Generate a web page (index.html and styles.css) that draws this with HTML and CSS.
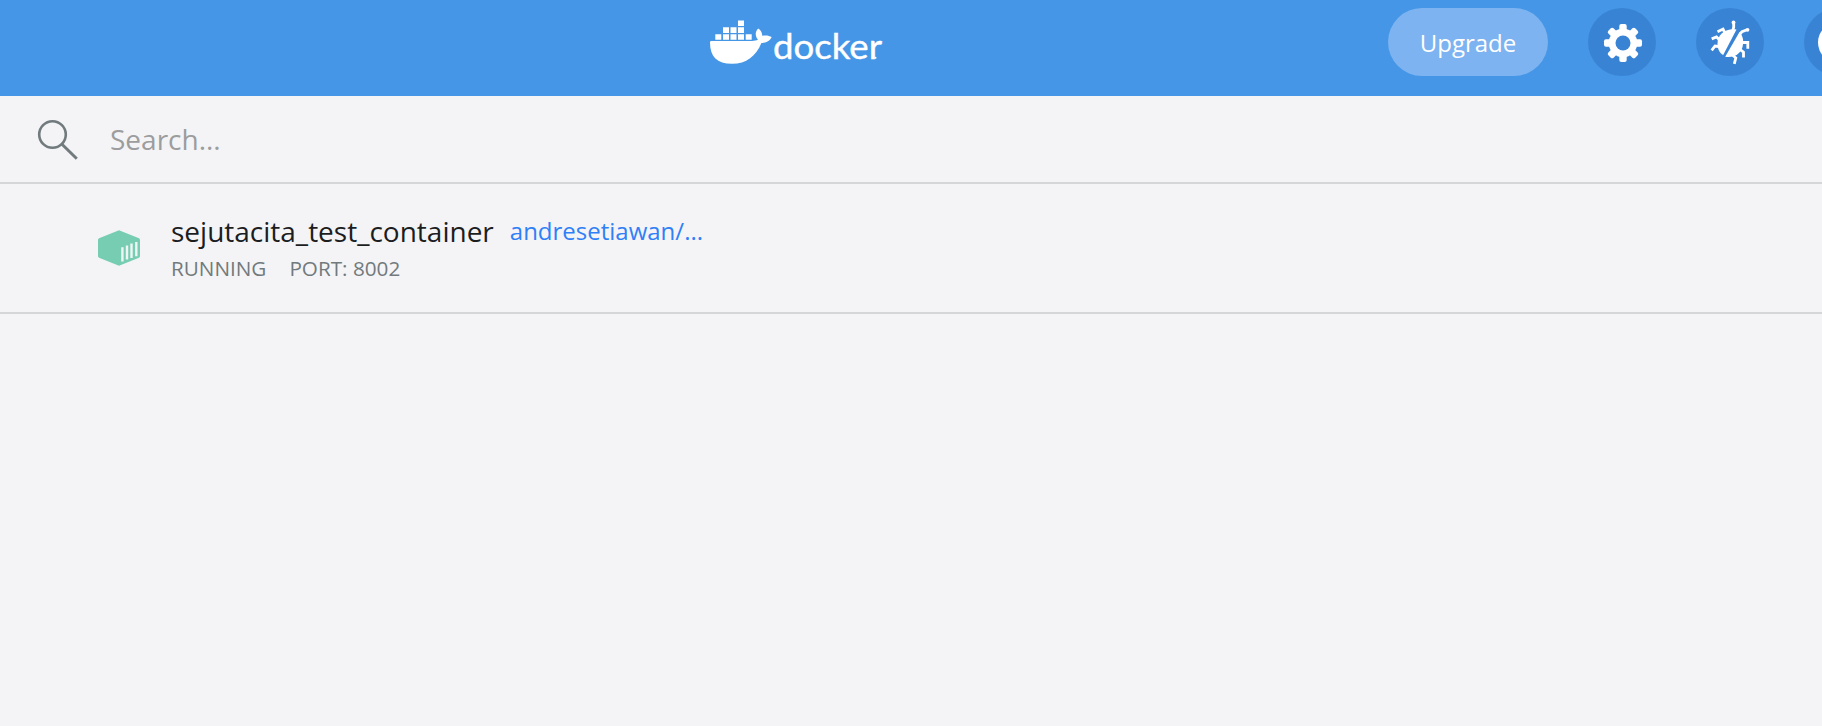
FILE: index.html
```html
<!DOCTYPE html>
<html lang="en">
<head>
<meta charset="utf-8">
<title>Docker</title>
<link rel="stylesheet" href="styles.css">
</head>
<body>
<header class="topbar">
  <svg class="logo" width="190" height="60" viewBox="0 0 190 60" fill="#fff" aria-label="docker">
    <path d="M38 10.500h6v5.500h-6zM23 17.300h6v5.600h-6zM30.500 17.300h6v5.600h-6zM38 17.300h6v5.600h-6zM15.300 24.200h6v5.600h-6zM23 24.200h6v5.600h-6zM30.500 24.200h6v5.600h-6zM38 24.200h6v5.600h-6zM45.700 24.200h6v5.600h-6z"/>
    <path d="M11.500 31H52c2.500 0 4.500-.5 6-1.200-2.800-3.500-3.300-7.800.2-11.300 2.500 1.500 4 4.200 4.100 7.300 3.200-.8 6.800-.5 9.400 1.200-1.700 4-5.500 5.800-10.300 5.900C56 46 46.500 53.800 32 53.800 17 53.800 10 46.500 10 32.500c0-1 .5-1.500 1.500-1.500z"/>
    <text class="wordmark" x="73" y="48.500" textLength="109" lengthAdjust="spacingAndGlyphs">docker</text>
    <circle cx="175.500" cy="47.700" r="1"/>
  </svg>
  <div class="actions">
    <button class="upgrade">Upgrade</button>
    <button class="round" aria-label="Settings">
      <svg width="68" height="68" viewBox="0 0 68 68">
        <g fill="#fff">
          <circle cx="35" cy="35" r="14.300"/>
          <rect x="31.300" y="16" width="7.400" height="38" rx="2"/>
          <rect x="31.300" y="16" width="7.400" height="38" rx="2" transform="rotate(45 35 35)"/>
          <rect x="31.300" y="16" width="7.400" height="38" rx="2" transform="rotate(90 35 35)"/>
          <rect x="31.300" y="16" width="7.400" height="38" rx="2" transform="rotate(135 35 35)"/>
        </g>
        <circle cx="35" cy="35" r="7.500" fill="#3983d5"/>
      </svg>
    </button>
    <button class="round" aria-label="Troubleshoot">
      <svg width="68" height="68" viewBox="0 0 68 68">
        <g fill="none" stroke="#fff" stroke-width="2.800">
          <path d="M36.500 23.500l1.200-4.500v-4.500M44 26l2-2.300 5-2M29 25l-2-4-5.500 2.700M23 31.500l-2.500-2.600-4.800 2M22.500 38.500l-3.500-.5-3.300 4.300M45.500 34.500h6.300v6.300M43.500 41l4 3.200v5.300M36.500 47l3.300 3-1.500 5.800"/>
        </g>
        <g fill="#fff">
          <circle cx="37.500" cy="14.500" r="1.900"/><circle cx="51.500" cy="21.800" r="1.900"/>
          <path d="M40.500 21.500C30 20 21.500 26 21.500 35.500 21.500 41 23.500 45 27.200 47z"/>
          <path d="M43.500 24C47 28 48 33 46.500 39 44.500 46 38 50 29.200 48.700z"/>
        </g>
      </svg>
    </button>
    <button class="round" aria-label="Account">
      <svg width="68" height="68" viewBox="0 0 68 68">
        <circle cx="34" cy="34.500" r="20" fill="#fff"/>
      </svg>
    </button>
  </div>
</header>
<label class="search">
  <svg class="glass" width="42" height="42" viewBox="0 0 42 42" fill="none" stroke="#717a7c" stroke-width="2.600">
    <circle cx="15.500" cy="15.500" r="13.300"/>
    <path d="M25 25.300L39.800 39.800" stroke-width="3"/>
  </svg>
  <input class="field" type="text" placeholder="Search...">
</label>
<main>
  <article class="row">
    <svg class="box" width="42" height="36" viewBox="0 0 42 36">
      <path d="M21 .2L41 8.200Q42 8.700 42 9.800V26Q42 27.200 41 27.700L21 35.800 1 27.700Q0 27.200 0 26V9.800Q0 8.700 1 8.200z" fill="#77cdb2"/>
      <path d="M24.400 17.200V31.500M29 15.500V29.600M33.500 13.500V28M38.300 12V26.200" stroke="#eef5f4" stroke-width="2.400"/>
    </svg>
    <div class="info">
      <div class="title"><span class="name">sejutacita_test_container</span><a class="image">andresetiawan/...</a></div>
      <div class="meta"><span>RUNNING</span><span>PORT: 8002</span></div>
    </div>
  </article>
</main>
</body>
</html>
```
FILE: styles.css
```css
* { box-sizing: border-box; }
body {
  margin: 0;
  height: 726px;
  overflow: hidden;
  background: #f4f4f6;
  font-family: "Open Sans", "Noto Sans", sans-serif;
}
button { border: 0; padding: 0; font: inherit; color: #fff; }
.topbar {
  height: 96px;
  display: flex;
  align-items: flex-start;
  padding-left: 700px;
  overflow: hidden;
  background: #4596e6;
}
.logo { flex: none; margin-top: 10px; }
.wordmark {
  font-family: Lato, sans-serif;
  font-size: 34px;
  font-weight: 400;
  stroke: #fff;
  stroke-width: .4px;
}
.actions { display: flex; flex: none; gap: 40px; margin: 8px 0 0 498px; }
.upgrade {
  width: 160px;
  height: 68px;
  border-radius: 34px;
  background: #7db3f0;
  font-size: 24px;
}
.round {
  flex: none;
  width: 68px;
  height: 68px;
  border-radius: 50%;
  background: #3983d5;
}
.round svg { display: block; }
.search {
  height: 88px;
  display: flex;
  align-items: center;
  gap: 31px;
  padding-left: 37px;
  border-bottom: 2px solid #d5d6d8;
}
.glass { margin-top: 2px; }
.field {
  width: 800px;
  padding: 0;
  border: 0;
  outline: 0;
  background: none;
  font: 28px "Open Sans", sans-serif;
}
.field::placeholder { color: #9c9d9e; opacity: 1; }
.row {
  height: 130px;
  display: flex;
  align-items: flex-start;
  gap: 31px;
  padding: 27px 0 0 98px;
  border-bottom: 2px solid #d5d6d8;
}
.box { margin-top: 19px; }
.title { display: flex; align-items: baseline; gap: 16px; line-height: 40px; }
.name { font-size: 28px; color: #1c1d1f; }
.image { font-size: 24px; color: #2f80f7; position: relative; top: -2px; }
.meta {
  display: flex;
  gap: 23px;
  line-height: 30px;
  font-size: 20.700px;
  color: #727a7d;
}
```
